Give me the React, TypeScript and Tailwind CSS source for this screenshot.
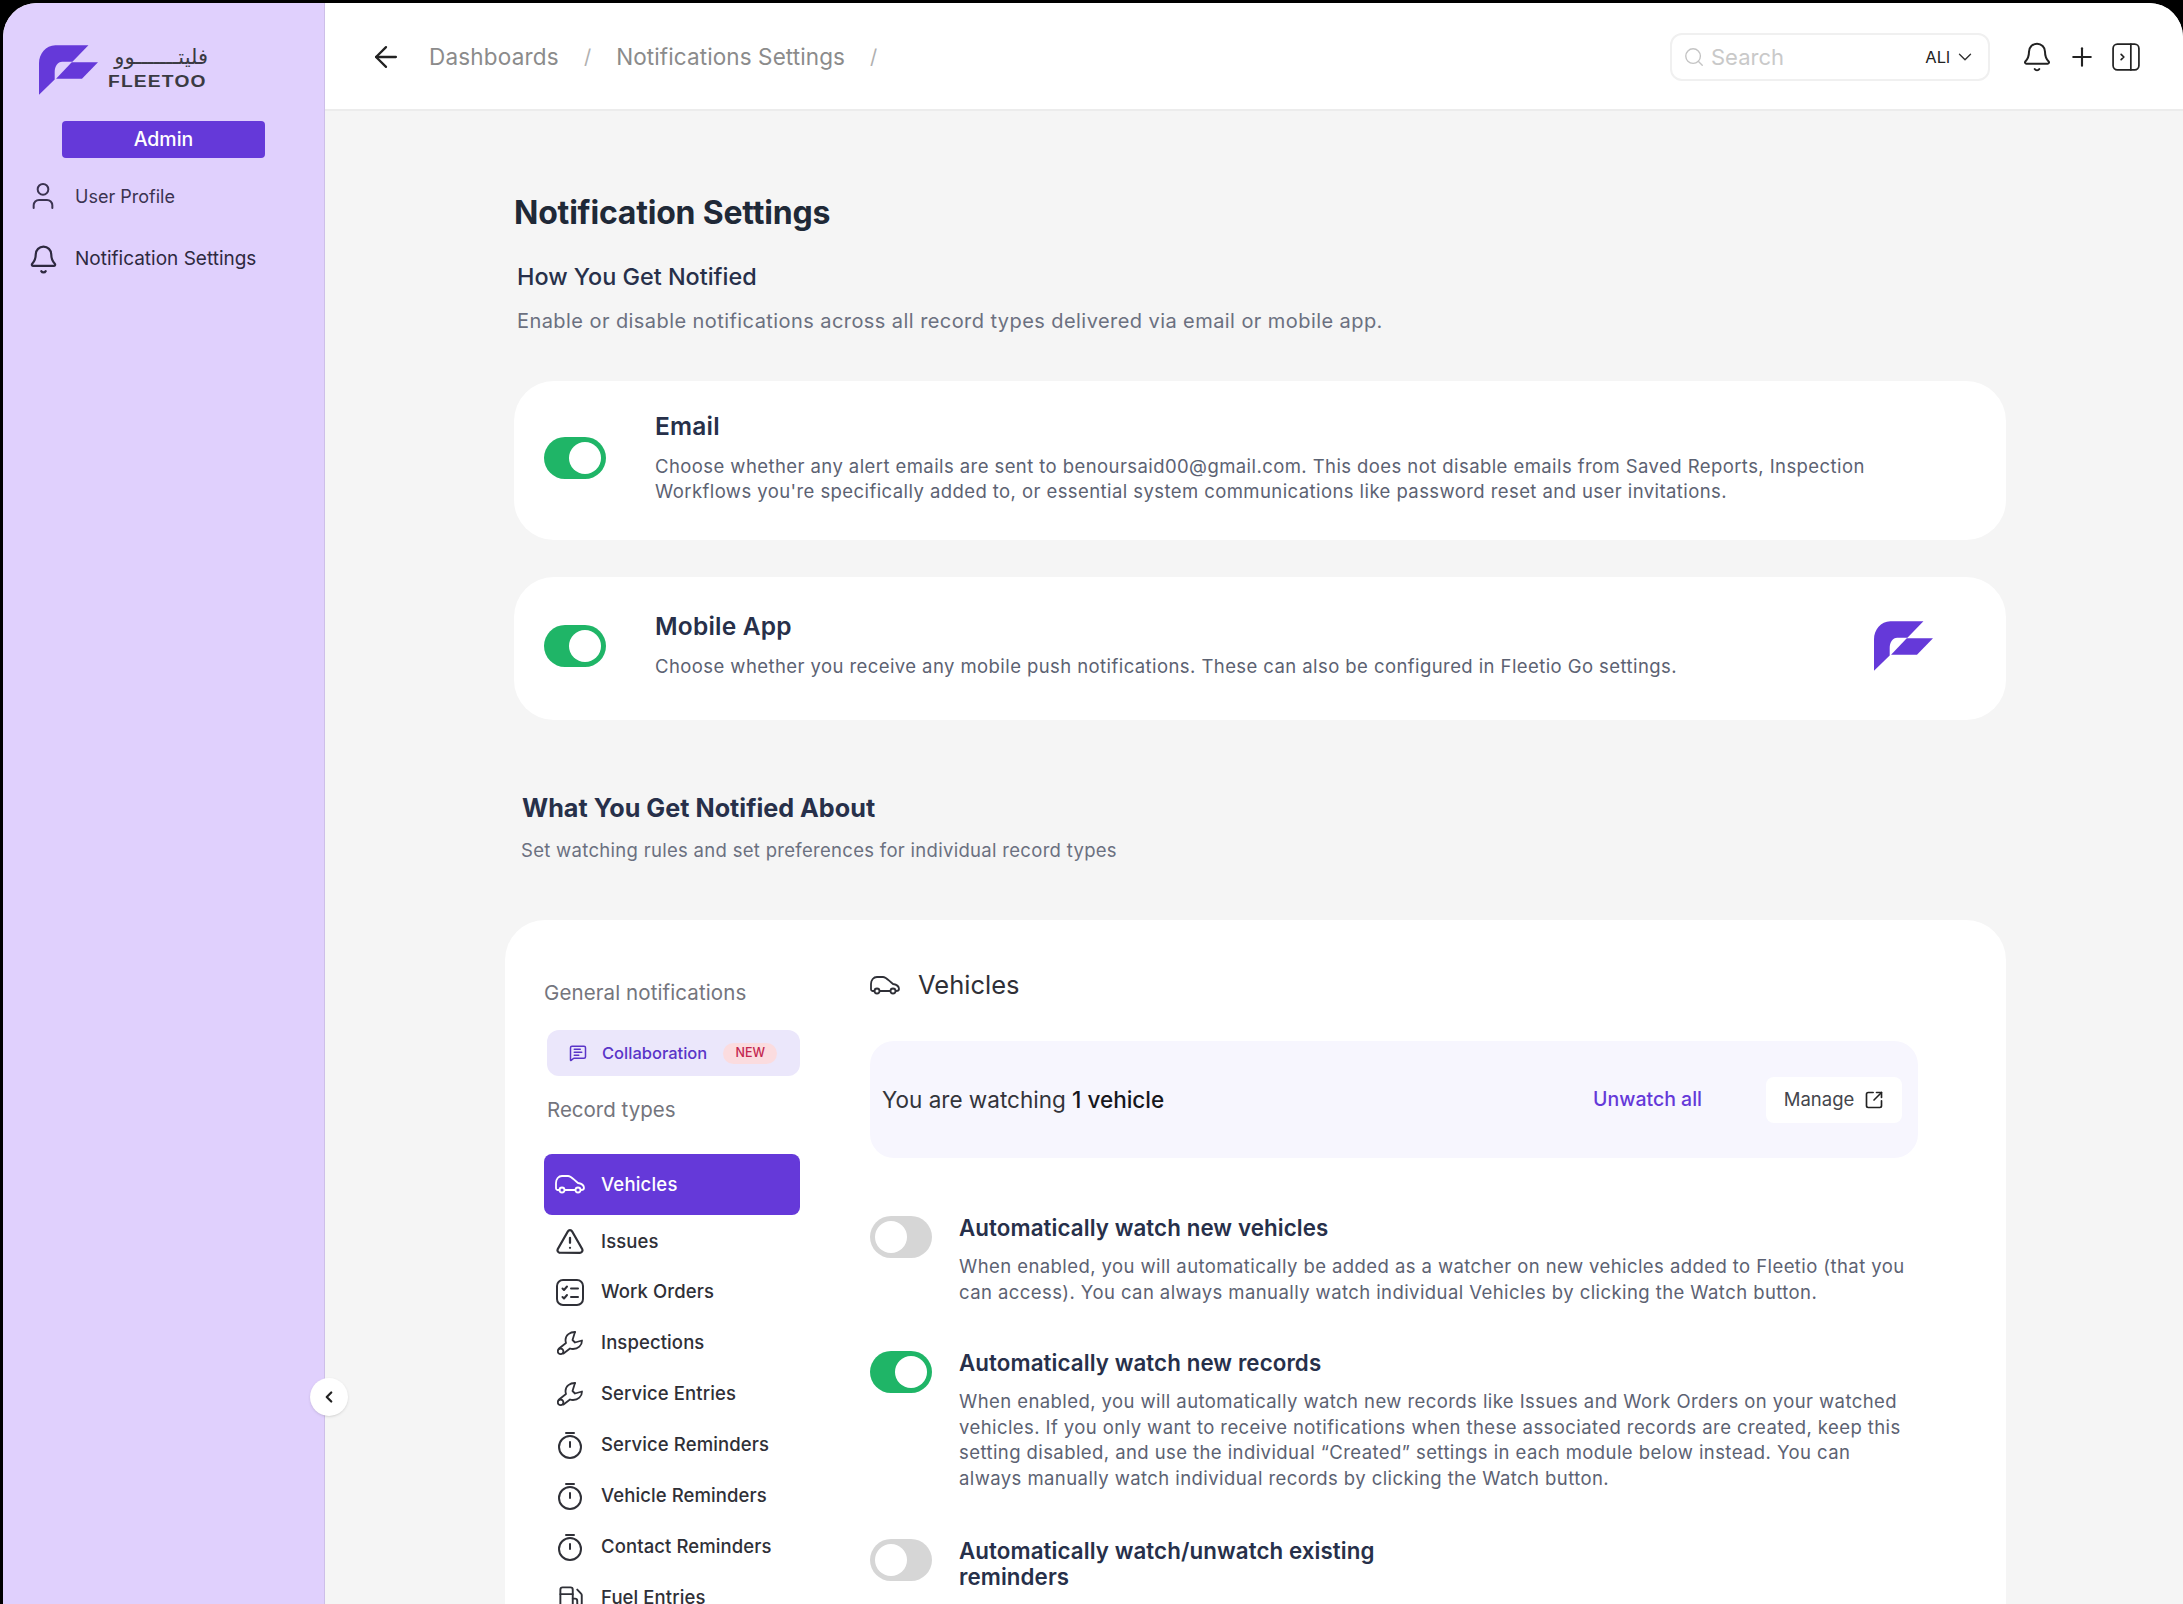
import { ArrowLeft, Bell, ChevronDown, ChevronLeft, Fuel, MessageSquareText, Plus, Search, SquareArrowOutUpRight, TriangleAlert, User } from "lucide-react";
import type { ReactNode } from "react";

function Mark({ className }: { className: string }) {
  return (
    <svg viewBox="0 0 173 145" className={className} fill="#6539d9">
      <path d="M145 0H48C20 0 0 25 0 53V145L46 100V78C46 62 55 48 68 48H98Z" />
      <path d="M96 50H173L126 98H50Z" />
    </svg>
  );
}

function CarIcon({ className }: { className: string }) {
  return (
    <svg viewBox="0 0 30 19" className={className} fill="none" stroke="currentColor" strokeWidth="1.800" strokeLinecap="round" strokeLinejoin="round">
      <path d="M4.500 15H2.500C1.500 15 1 14 1 13V8C1 4 3.500 1 7 1H13C16 1 18 4 23 8C26 8.500 29 10 29 13C29 14.500 28 15 26 15" />
      <path d="M10 15H20" />
      <circle cx="7" cy="15" r="2.500" />
      <circle cx="23" cy="15" r="2.500" />
    </svg>
  );
}

function OrdersIcon() {
  return (
    <svg viewBox="0 0 28 27" className="h-[27px] w-[28px]" fill="none" stroke="currentColor" strokeWidth="2" strokeLinecap="round" strokeLinejoin="round">
      <rect x="1" y="1" width="26" height="25" rx="6" />
      <path d="M6.500 9.500L8 11L11 7.500" />
      <path d="M6.500 18L8 19.500L11 16" />
      <path d="M15 9.500H22" />
      <path d="M15 18H22" />
    </svg>
  );
}

function WrenchIcon() {
  return (
    <svg viewBox="0 0 26 24" className="h-[24px] w-[26px]" fill="none" stroke="currentColor" strokeWidth="1.800" strokeLinecap="round" strokeLinejoin="round">
      <path d="M18 1C13 1 8.500 4 8.500 9C8.500 10 8.700 11 9 12L2 17.500" />
      <path d="M6.500 22.500L13 17.500C14 18 15 18 16 18C21 18 25 14.500 25 9.500L18 11.500L15.500 9L18 1" />
      <circle cx="3.600" cy="20.300" r="2.800" />
    </svg>
  );
}

function TimerIcon() {
  return (
    <svg viewBox="0 0 26 28" className="h-[28px] w-[26px]" fill="none" stroke="currentColor" strokeWidth="2" strokeLinecap="round">
      <path d="M9 2H17" />
      <circle cx="13" cy="16" r="11" />
      <path d="M13 11V16" />
    </svg>
  );
}

function Toggle({ on }: { on: boolean }) {
  return (
    <div className={`flex h-[42px] w-[62px] shrink-0 items-center rounded-full px-[5px] ${on ? "justify-end bg-[#1fb567]" : "justify-start bg-[#d6d6d6]"}`}>
      <div className="h-[32px] w-[32px] rounded-full bg-white" />
    </div>
  );
}

function ChannelCard({ title, lines, extra }: { title: string; lines: string[]; extra?: ReactNode }) {
  return (
    <div className="flex items-center rounded-[40px] bg-white pb-[6px] pl-[30px] pr-[73px]">
      <Toggle on />
      <div className="ml-[49px] flex-1">
        <div className="text-[24.500px] leading-[30px] font-semibold tracking-[0.2px] text-[#27304a]">{title}</div>
        <div className="mt-[13px] text-[18.500px] leading-[25.500px] tracking-[0.42px] text-[#5c6272]">
          {lines.map((l) => (
            <div key={l} className="whitespace-nowrap">{l}</div>
          ))}
        </div>
      </div>
      {extra}
    </div>
  );
}

const records = [
  { label: "Issues", icon: <TriangleAlert size={31} strokeWidth={1.800} /> },
  { label: "Work Orders", icon: <OrdersIcon /> },
  { label: "Inspections", icon: <WrenchIcon /> },
  { label: "Service Entries", icon: <WrenchIcon /> },
  { label: "Service Reminders", icon: <TimerIcon /> },
  { label: "Vehicle Reminders", icon: <TimerIcon /> },
  { label: "Contact Reminders", icon: <TimerIcon /> },
  { label: "Fuel Entries", icon: <Fuel size={27} strokeWidth={1.700} /> },
];

function WatchRule({ on, title, lines, className }: { on: boolean; title: string[]; lines: string[]; className: string }) {
  return (
    <div className={`flex ${className}`}>
      <Toggle on={on} />
      <div className="ml-[27px] -mt-[1px]">
        <div className="text-[22.300px] leading-[26px] font-semibold tracking-[0.1px] text-[#27304a]">
          {title.map((t) => (
            <div key={t} className="whitespace-nowrap">{t}</div>
          ))}
        </div>
        <div className="mt-[13px] text-[18.500px] leading-[25.500px] tracking-[0.42px] text-[#5c6272]">
          {lines.map((l) => (
            <div key={l} className="whitespace-nowrap">{l}</div>
          ))}
        </div>
      </div>
    </div>
  );
}

export default function App() {
  return (
    <div className="h-[1604px] w-[2183px] overflow-hidden bg-black pt-[3px] pl-[3px] font-['Inter',sans-serif]">
      <div className="relative flex h-[1601px] overflow-hidden rounded-t-[34px] bg-[#f5f5f5]">
        <aside className="w-[322px] shrink-0 border-r border-r-[#cdbfe8] bg-[#e0d0fd]">
          <div className="ml-[36px] mt-[42px] flex h-[50px] items-start">
            <Mark className="h-[50px] w-[59px]" />
            <div className="ml-[10px] mt-[1px] w-[100px] text-[#3a3a42]">
              <div dir="rtl" className="font-['DejaVu_Sans',sans-serif] text-[21px] leading-[22px] whitespace-nowrap">فليتـــــــوو</div>
              <div className="mt-[7px] origin-left scale-x-[1.2] font-['Liberation_Sans',sans-serif] text-[16px] leading-[14px] font-bold tracking-[1px] whitespace-nowrap">FLEETOO</div>
            </div>
          </div>
          <div className="ml-[59px] mt-[26px] flex h-[37px] w-[203px] items-center justify-center rounded-[4px] bg-[#6539d9] text-[19.500px] font-medium text-white">Admin</div>
          <div className="mt-[22px] flex items-center pl-[24px] text-[18px] text-[#3b3350]">
            <User size={32} strokeWidth={1.500} />
            <span className="ml-[16px]">User Profile</span>
          </div>
          <div className="mt-[32px] flex items-center pl-[25px] text-[19px] text-[#2e2940]">
            <Bell size={31} strokeWidth={1.700} />
            <span className="ml-[16px] whitespace-nowrap">Notification Settings</span>
          </div>
        </aside>

        <div className="min-w-0 flex-1">
          <header className="flex h-[108px] items-center border-b-2 border-b-[#ececec] bg-white pl-[44px] pr-[43px] pt-[2px]">
            <ArrowLeft size={34} strokeWidth={1.600} className="text-[#222]" />
            <span className="ml-[26px] text-[22.500px] tracking-[0.2px] text-[#8b8b8b]">Dashboards</span>
            <span className="ml-[25px] text-[20px] text-[#b0b0b0]">/</span>
            <span className="ml-[25px] text-[22.500px] tracking-[0.1px] text-[#8b8b8b]">Notifications Settings</span>
            <span className="ml-[25px] text-[20px] text-[#b0b0b0]">/</span>
            <div className="ml-auto flex h-[48px] w-[320px] items-center rounded-[12px] border-2 border-[#f0f0f0] pl-[11px] pr-[12px]">
              <Search size={22} strokeWidth={1.500} className="text-[#c4c4c4]" />
              <span className="ml-[6px] text-[22px] text-[#c9c9c9]">Search</span>
              <span className="ml-auto text-[16.500px] text-[#222]">ALl</span>
              <ChevronDown size={22} strokeWidth={1.500} className="ml-[4px] text-[#333]" />
            </div>
            <Bell size={32} strokeWidth={1.500} className="ml-[31px] text-[#222]" />
            <Plus size={30} strokeWidth={1.700} className="ml-[14px] text-[#222]" />
            <svg viewBox="0 0 26 26" className="ml-[15px] h-[28px] w-[28px] text-[#222]" fill="none" stroke="currentColor" strokeWidth="1.600" strokeLinecap="round" strokeLinejoin="round">
              <rect x="1" y="1" width="24" height="24" rx="4" />
              <path d="M17.500 1V25" />
              <path d="M8.500 10.500L11 13L8.500 15.500" />
            </svg>
          </header>

          <main className="pl-[189px] pr-[177px]">
            <h1 className="mt-[83px] text-[32px] leading-[38px] font-bold tracking-[-0.2px] text-[#1f2937]">Notification Settings</h1>
            <h2 className="ml-[3px] mt-[29px] text-[23.400px] leading-[32px] font-medium text-[#27304a]">How You Get Notified</h2>
            <p className="ml-[3px] mt-[13px] text-[20px] leading-[30px] tracking-[0.43px] text-[#6b7080]">Enable or disable notifications across all record types delivered via email or mobile app.</p>

            <div className="mt-[45px] flex flex-col gap-[37px]">
              <div className="h-[159px] [&>div]:h-full">
                <ChannelCard
                  title="Email"
                  lines={[
                    "Choose whether any alert emails are sent to benoursaid00@gmail.com. This does not disable emails from Saved Reports, Inspection",
                    "Workflows you're specifically added to, or essential system communications like password reset and user invitations.",
                  ]}
                />
              </div>
              <div className="h-[143px] [&>div]:h-full">
                <ChannelCard
                  title="Mobile App"
                  lines={["Choose whether you receive any mobile push notifications. These can also be configured in Fleetio Go settings."]}
                  extra={<Mark className="h-[50px] w-[59px]" />}
                />
              </div>
            </div>

            <h2 className="ml-[8px] mt-[70px] text-[25.200px] leading-[36px] font-bold text-[#27304a]">What You Get Notified About</h2>
            <p className="ml-[7px] mt-[10px] text-[18.500px] leading-[28px] tracking-[0.3px] text-[#6b7080]">Set watching rules and set preferences for individual record types</p>

            <section className="-ml-[9px] mt-[56px] flex h-[800px] rounded-t-[40px] bg-white pl-[39px] pr-[88px]">
              <nav className="w-[256px] shrink-0 pt-[59px]">
                <div className="text-[20.500px] leading-[28px] tracking-[0.1px] text-[#74757d]">General notifications</div>
                <div className="ml-[3px] mt-[23px] flex h-[46px] w-[253px] items-center rounded-[12px] bg-[#ebe7fb] pl-[22px]">
                  <MessageSquareText size={18} strokeWidth={2} className="text-[#5a35c8]" />
                  <span className="ml-[15px] text-[16.500px] font-medium text-[#5a35c8]">Collaboration</span>
                  <span className="ml-[16px] flex h-[21px] w-[54px] items-center justify-center rounded-full bg-[#fbdcdf] text-[12.500px] font-medium text-[#c3274f]">NEW</span>
                </div>
                <div className="ml-[3px] mt-[20px] text-[20.500px] leading-[28px] text-[#74757d]">Record types</div>
                <div className="mt-[30px] flex h-[61px] items-center rounded-[8px] bg-[#6539d9] pl-[11px] text-white">
                  <CarIcon className="h-[19px] w-[30px]" />
                  <span className="ml-[16px] text-[18.500px] font-medium tracking-[0.2px]">Vehicles</span>
                </div>
                <div className="mt-[1px]">
                  {records.map((r) => (
                    <div key={r.label} className="flex h-[50.900px] items-center text-[18.500px] font-medium tracking-[0.1px] text-[#2f3037]">
                      <span className="ml-[11px] flex w-[30px] justify-center">{r.icon}</span>
                      <span className="ml-[16px] whitespace-nowrap">{r.label}</span>
                    </div>
                  ))}
                </div>
              </nav>

              <div className="ml-[70px] min-w-0 flex-1">
                <div className="mt-[50px] flex h-[30px] items-center text-[#2f3037]">
                  <CarIcon className="h-[19px] w-[30px]" />
                  <span className="ml-[18px] text-[25.500px] leading-[30px]">Vehicles</span>
                </div>
                <div className="mt-[41px] flex h-[117px] items-center rounded-[24px] bg-[#f7f6fe] pl-[12px] pr-[16px]">
                  <span className="text-[22.500px] text-[#33343a]">You are watching <span className="font-medium text-[#16171c]">1 vehicle</span></span>
                  <span className="ml-auto text-[19.500px] font-medium text-[#6539d9]">Unwatch all</span>
                  <div className="ml-[64px] flex h-[46px] w-[136px] items-center justify-center rounded-[8px] bg-white text-[18.500px] text-[#44454c]">
                    Manage
                    <SquareArrowOutUpRight size={20} strokeWidth={2} className="ml-[10px] text-[#222]" />
                  </div>
                </div>

                <WatchRule
                  on={false}
                  className="mt-[58px]"
                  title={["Automatically watch new vehicles"]}
                  lines={[
                    "When enabled, you will automatically be added as a watcher on new vehicles added to Fleetio (that you",
                    "can access). You can always manually watch individual Vehicles by clicking the Watch button.",
                  ]}
                />
                <WatchRule
                  on
                  className="mt-[46px]"
                  title={["Automatically watch new records"]}
                  lines={[
                    "When enabled, you will automatically watch new records like Issues and Work Orders on your watched",
                    "vehicles. If you only want to receive notifications when these associated records are created, keep this",
                    "setting disabled, and use the individual “Created” settings in each module below instead. You can",
                    "always manually watch individual records by clicking the Watch button.",
                  ]}
                />
                <WatchRule
                  on={false}
                  className="mt-[48px]"
                  title={["Automatically watch/unwatch existing", "reminders"]}
                  lines={[]}
                />
              </div>
            </section>
          </main>
        </div>

        <button type="button" className="absolute left-[307px] top-[1375px] flex h-[38px] w-[38px] items-center justify-center rounded-full bg-white text-[#222] shadow-sm">
          <ChevronLeft size={18} strokeWidth={3} />
        </button>
      </div>
    </div>
  );
}
